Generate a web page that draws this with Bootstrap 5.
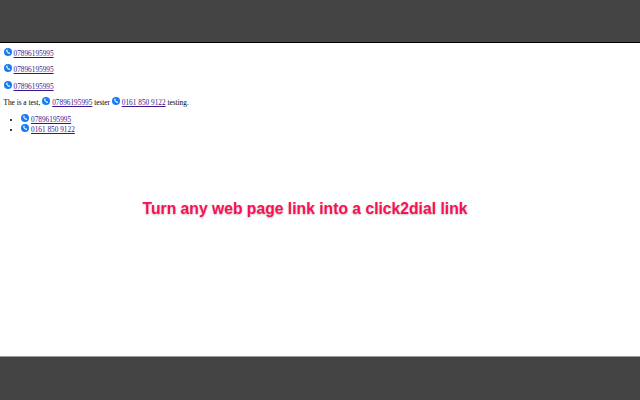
<!DOCTYPE html>
<html lang="en">
<head>
<meta charset="utf-8">
<title>click2dial</title>
<link href="https://cdn.jsdelivr.net/npm/bootstrap@5.3.0/dist/css/bootstrap.min.css" rel="stylesheet">
<style>
html,body{height:400px;overflow:hidden;background:#fff}
.shot{height:400px}
.band-top{height:43px;background:#444;border-bottom:1px solid #000}
.band-bottom{height:44px;background:#444;border-top:1px solid #999}
.page{flex:1 1 auto;min-height:0;overflow:hidden;padding:5px 3.5px 0;font:7.3px/9.2px "Liberation Serif",serif;color:#000}
.page a{color:#3a1590;text-decoration:underline}
.page p{margin:0 0 6.2px}
.page ul{margin:0;padding:0 0 0 17.5px}
.dial{width:8px;height:8px;vertical-align:0;margin-right:2px}
.promo{margin:65px 0 0;padding-right:30px;text-align:center;font:700 15.7px/20px "Liberation Sans",sans-serif;color:#fb0f55;text-shadow:0 1px 2px rgba(0,0,0,.25)}
.fade{height:11px;margin:0 22px;background:linear-gradient(#fff,#ececec 80%,#dcdcdc)}
.page-wrap{flex:1 1 auto;min-height:0}
</style>
</head>
<body>
<svg width="0" height="0" class="d-block" aria-hidden="true"><defs><symbol id="ph" viewBox="0 0 16 16"><circle cx="8" cy="8" r="8" fill="#1a7cf2"/><path d="M4.6 4.2c-1 2.8 2.600 7.300 6.400 7.600l1.300-1.800-2.300-1.500-1 .7C8 8.600 7 7.500 6.600 6.300l.9-.9-1.200-2.300z" fill="#fff"/></symbol></defs></svg>
<div class="shot d-flex flex-column">
  <div class="band-top flex-shrink-0"></div>
  <div class="page-wrap d-flex flex-column">
    <div class="page">
      <p><svg class="dial"><use href="#ph"/></svg><a href="#">07896195995</a></p>
      <p><svg class="dial"><use href="#ph"/></svg><a href="#">07896195995</a></p>
      <p><svg class="dial"><use href="#ph"/></svg><a href="#">07896195995</a></p>
      <p>The is a test, <svg class="dial"><use href="#ph"/></svg><a href="#">07896195995</a> tester <svg class="dial"><use href="#ph"/></svg><a href="#">0161 850 9122</a> testing.</p>
      <ul>
        <li><svg class="dial"><use href="#ph"/></svg><a href="#">07896195995</a></li>
        <li><svg class="dial"><use href="#ph"/></svg><a href="#">0161 850 9122</a></li>
      </ul>
      <h1 class="promo">Turn any web page link into a click2dial link</h1>
    </div>
    <div class="fade flex-shrink-0"></div>
  </div>
  <div class="band-bottom flex-shrink-0"></div>
</div>
</body>
</html>
